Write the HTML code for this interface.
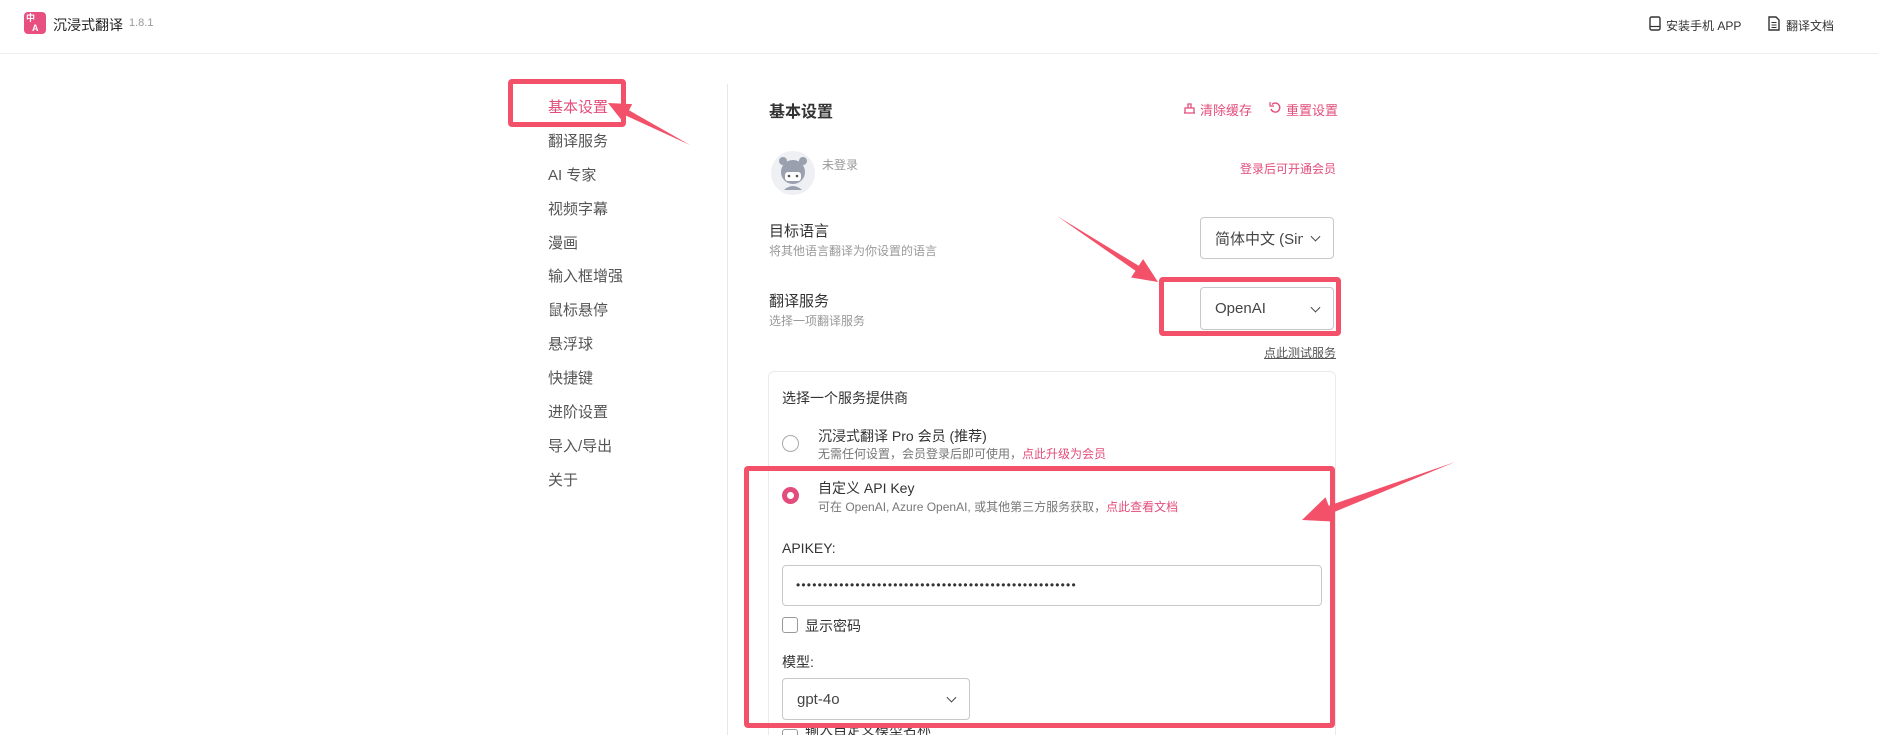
<!DOCTYPE html>
<html><head><meta charset="utf-8"><style>
*{margin:0;padding:0;box-sizing:border-box}
html,body{width:1878px;height:735px;overflow:hidden}
body{background:#fff;font-family:"Liberation Sans","Noto Sans CJK SC",sans-serif;color:#333;position:relative}
.a{position:absolute;white-space:nowrap}
.nav{position:absolute;left:548px;font-size:15px;color:#555;line-height:18px}
.pk{color:#e34d7c}
.lbl{font-size:15px;color:#333}
.sub{font-size:12px;color:#999}
.sel{position:absolute;border:1px solid #c8c8c8;border-radius:4px;background:#fff;font-size:15px;color:#444;padding-left:14px;display:flex;align-items:center;white-space:nowrap;overflow:hidden}
.chev{position:absolute;right:14px;top:50%;width:7px;height:7px;border-right:1.6px solid #444;border-bottom:1.6px solid #444;transform:translateY(-70%) rotate(45deg)}
.rbox{position:absolute;border:5px solid #f25169;border-radius:4px}
</style></head><body>
<!-- header -->
<div class="a" style="left:24px;top:12px;width:22px;height:22px;background:#e8507f;border-radius:4px;color:#fff;font-size:9px;line-height:10px;padding:1px 2px;font-weight:bold">中<br><span style="padding-left:6px">A</span></div>
<div class="a" style="left:53px;top:15px;font-size:14px;color:#222">沉浸式翻译</div>
<div class="a" style="left:129px;top:17px;font-size:11px;color:#999">1.8.1</div>
<svg class="a" style="left:1649px;top:16px" width="12" height="15" viewBox="0 0 12 15"><rect x="1" y="1" width="10" height="13" rx="1.5" fill="none" stroke="#333" stroke-width="1.4"/><line x1="1" y1="10.5" x2="11" y2="10.5" stroke="#333" stroke-width="1.2"/></svg>
<div class="a" style="left:1666px;top:17px;font-size:12px;color:#333">安装手机 APP</div>
<svg class="a" style="left:1768px;top:16px" width="12" height="15" viewBox="0 0 12 15"><path d="M1 1h7l3 3v10H1z" fill="none" stroke="#333" stroke-width="1.4"/><path d="M3.5 6.5h5M3.5 9h5M3.5 11.5h5" stroke="#333" stroke-width="1.1"/></svg>
<div class="a" style="left:1786px;top:17px;font-size:12px;color:#333">翻译文档</div>
<div class="a" style="left:0;top:53px;width:1878px;height:1px;background:#eee"></div>

<!-- sidebar -->
<div class="nav pk" style="top:99px">基本设置</div>
<div class="nav" style="top:133px">翻译服务</div>
<div class="nav" style="top:167px">AI 专家</div>
<div class="nav" style="top:201px">视频字幕</div>
<div class="nav" style="top:235px">漫画</div>
<div class="nav" style="top:268px">输入框增强</div>
<div class="nav" style="top:302px">鼠标悬停</div>
<div class="nav" style="top:336px">悬浮球</div>
<div class="nav" style="top:370px">快捷键</div>
<div class="nav" style="top:404px">进阶设置</div>
<div class="nav" style="top:438px">导入/导出</div>
<div class="nav" style="top:472px">关于</div>
<div class="rbox" style="left:508px;top:79px;width:118px;height:48px"></div>
<div class="a" style="left:727px;top:84px;width:1px;height:651px;background:#e8e8e8"></div>

<!-- main -->
<div class="a" style="left:769px;top:98px;font-size:16px;font-weight:bold;color:#333">基本设置</div>
<svg class="a" style="left:1183px;top:102px" width="13" height="12" viewBox="0 0 13 12"><path d="M1 11h11M2 11V6h9v5M5 6V2h3v4" fill="none" stroke="#e34d7c" stroke-width="1.3"/></svg>
<div class="a pk" style="left:1200px;top:100px;font-size:13px">清除缓存</div>
<svg class="a" style="left:1269px;top:101px" width="13" height="13" viewBox="0 0 13 13"><path d="M3 3.5A4.5 4.5 0 1 1 2 8" fill="none" stroke="#e34d7c" stroke-width="1.4"/><path d="M1 1v4h4" fill="none" stroke="#e34d7c" stroke-width="1.2"/></svg>
<div class="a pk" style="left:1286px;top:100px;font-size:13px">重置设置</div>

<svg class="a" style="left:770px;top:150px" width="46" height="46" viewBox="0 0 46 46"><circle cx="23" cy="23" r="22" fill="#eef0f4"/><circle cx="23" cy="22" r="12" fill="#9aa0ad"/><circle cx="13" cy="11" r="4" fill="#9aa0ad"/><circle cx="33" cy="11" r="4" fill="#9aa0ad"/><rect x="15" y="22" width="16" height="9" rx="3" fill="#fff"/><circle cx="19" cy="26" r="1.3" fill="#555"/><circle cx="27" cy="26" r="1.3" fill="#555"/><path d="M14 40q9-8 18 0" fill="#9aa0ad"/></svg>
<div class="a" style="left:822px;top:156px;font-size:12px;color:#999">未登录</div>
<div class="a pk" style="right:542px;top:160px;font-size:12px">登录后可开通会员</div>

<div class="a lbl" style="left:769px;top:220px">目标语言</div>
<div class="a sub" style="left:769px;top:242px">将其他语言翻译为你设置的语言</div>
<div class="sel" style="left:1200px;top:217px;width:134px;height:42px"><span style="width:88px;overflow:hidden;display:inline-block;white-space:nowrap">简体中文 (Simplified)</span><i class="chev"></i></div>

<div class="a lbl" style="left:769px;top:290px">翻译服务</div>
<div class="a sub" style="left:769px;top:312px">选择一项翻译服务</div>
<div class="sel" style="left:1200px;top:287px;width:134px;height:43px">OpenAI<i class="chev"></i></div>
<div class="rbox" style="left:1159px;top:277px;width:182px;height:59px"></div>
<div class="a" style="right:542px;top:344px;font-size:12px;color:#555;text-decoration:underline">点此测试服务</div>

<!-- card -->
<div class="a" style="left:768px;top:371px;width:568px;height:364px;border:1px solid #eaeaea;border-bottom:none;border-radius:6px 6px 0 0"></div>
<div class="a" style="left:782px;top:388px;font-size:14px;color:#333">选择一个服务提供商</div>
<div class="a" style="left:782px;top:435px;width:17px;height:17px;border:1.5px solid #aaa;border-radius:50%"></div>
<div class="a" style="left:818px;top:426px;font-size:14px;color:#333">沉浸式翻译 Pro 会员 (推荐)</div>
<div class="a" style="left:818px;top:445px;font-size:12px;color:#777">无需任何设置，会员登录后即可使用，<span class="pk">点此升级为会员</span></div>

<div class="a" style="left:782px;top:487px;width:17px;height:17px;border:5px solid #e34d7c;border-radius:50%"></div>
<div class="a" style="left:818px;top:478px;font-size:14px;color:#333">自定义 API Key</div>
<div class="a" style="left:818px;top:498px;font-size:12px;color:#777">可在 OpenAI, Azure OpenAI, 或其他第三方服务获取，<span class="pk">点此查看文档</span></div>

<div class="a" style="left:782px;top:540px;font-size:14px;color:#333">APIKEY:</div>
<div class="a" style="left:782px;top:565px;width:540px;height:41px;border:1px solid #c8c8c8;border-radius:4px;padding-left:13px;font-size:12px;line-height:38px;color:#333;letter-spacing:1.2px">••••••••••••••••••••••••••••••••••••••••••••••••••••</div>
<div class="a" style="left:782px;top:617px;width:16px;height:16px;border:1.3px solid #999;border-radius:3px"></div>
<div class="a" style="left:805px;top:616px;font-size:14px;color:#333">显示密码</div>
<div class="a" style="left:782px;top:652px;font-size:14px;color:#333">模型:</div>
<div class="sel" style="left:782px;top:678px;width:188px;height:42px">gpt-4o<i class="chev"></i></div>
<div class="a" style="left:782px;top:729px;width:16px;height:6px;border:1.3px solid #999;border-bottom:none;border-radius:3px 3px 0 0"></div>
<div class="a" style="left:805px;top:726px;font-size:14px;line-height:9px;height:9px;overflow:hidden;color:#333">输入自定义模型名称</div>
<div class="rbox" style="left:744px;top:466px;width:591px;height:262px"></div>

<!-- arrows -->
<svg class="a" style="left:0;top:0" width="1878" height="735">
<g fill="#f25169">
<polygon points="690,145 629,110.3 632.2,104.1 608,103 623,121.9 626.2,115.7"/>
<polygon points="1057,216 1135.5,270.8 1131.1,277.5 1158,282 1143.1,259.1 1138.7,265.8"/>
<polygon points="1455,462 1328.7,505.7 1325.5,497.2 1302,520 1334.7,521.6 1331.5,513.1"/>
</g></svg>
</body></html>
